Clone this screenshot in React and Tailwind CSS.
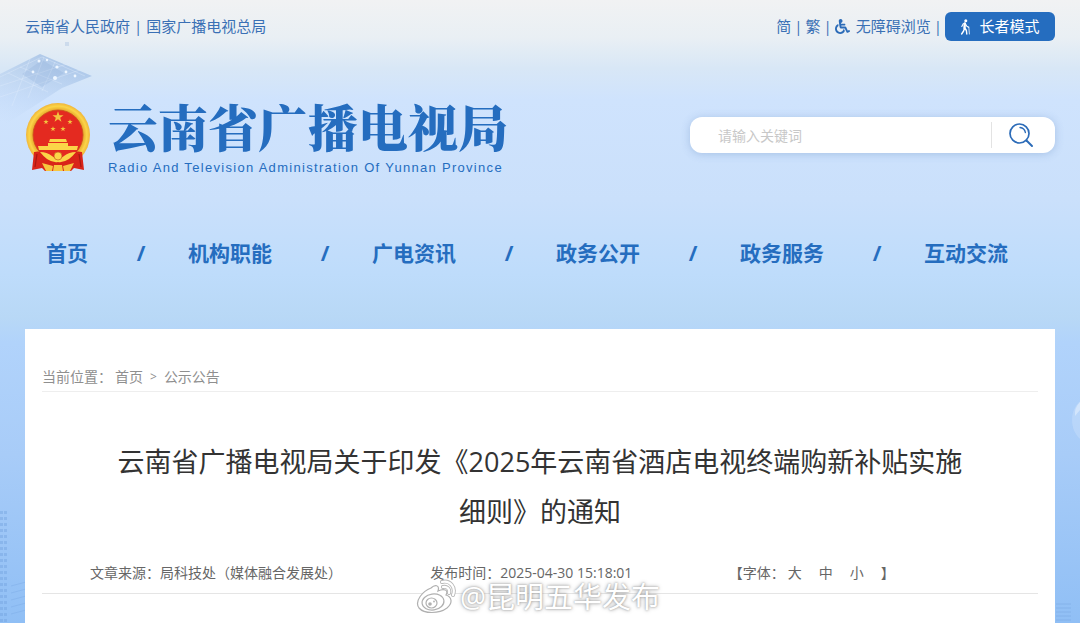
import { FaWheelchair } from 'react-icons/fa';

const navItems = ['首页', '机构职能', '广电资讯', '政务公开', '政务服务', '互动交流'];

function Backdrop() {
  return (
    <div className="absolute inset-0 overflow-hidden pointer-events-none" aria-hidden="true">
      <svg className="absolute left-0 top-9" width="130" height="100" viewBox="0 0 130 100">
        <defs>
          <linearGradient id="roof" x1="0.6" y1="0" x2="0.2" y2="1">
            <stop offset="0" stopColor="#8fb2e0" stopOpacity="0.65" />
            <stop offset="1" stopColor="#b9d2f3" stopOpacity="0" />
          </linearGradient>
        </defs>
        <path d="M0 38 L40 18 L92 40 L62 52 L0 92 Z" fill="url(#roof)" />
        <path d="M0 41 L42 21 L85 40 M0 50 L70 27 M0 61 L80 34 M12 70 L30 23 M28 62 L44 21 M42 55 L55 26 M20 31 L62 48 M8 37 L48 56" stroke="#e3eefc" strokeWidth="0.7" fill="none" opacity="0.5" />
        <path d="M22 38 L42 24 L64 37 L42 51 Z" fill="#7f9fd0" opacity="0.2" />
        <g fill="#eef6ff">
          <circle cx="39" cy="25" r="1.5" />
          <circle cx="47" cy="24" r="1.2" />
          <circle cx="57" cy="31" r="1.6" />
          <circle cx="66" cy="36" r="1.4" />
          <circle cx="55" cy="42" r="2" />
          <circle cx="33" cy="36" r="1.4" />
          <circle cx="75" cy="40" r="1.4" />
        </g>
        <rect x="65" y="6" width="4" height="4" fill="#c2d3e8" opacity="0.7" />
      </svg>
      <svg className="absolute left-0 bottom-0" width="26" height="112" viewBox="0 0 26 112">
        <defs>
          <pattern id="windows" width="4" height="6" patternUnits="userSpaceOnUse">
            <rect width="3" height="3" fill="#6f9fdc" />
          </pattern>
        </defs>
        <rect width="8" height="112" fill="url(#windows)" opacity="0.4" />
        <path d="M11 75 l15 -4 M11 82 l15 -4 M11 89 l15 -4 M11 96 l15 -4 M11 103 l15 -4" stroke="#7aa9e6" opacity="0.4" />
      </svg>
      <svg className="absolute right-0 bottom-0" width="25" height="225" viewBox="0 0 25 225">
        <ellipse cx="34" cy="22" rx="17" ry="22" fill="#d3e5fc" opacity="0.35" />
        <path d="M25 4 Q19 10 20 18 L25 12 Z" fill="#e2eefd" opacity="0.6" />
        <path d="M1 206 h15 M1 210 h15 M1 214 h15 M1 218 h15 M1 222 h15" stroke="#78a7e2" opacity="0.5" />
      </svg>
    </div>
  );
}

function WalkerIcon() {
  return (
    <svg width="11" height="16" viewBox="0 0 11 16" fill="none" stroke="currentColor" strokeLinecap="round" strokeLinejoin="round" aria-hidden="true">
      <circle cx="5.8" cy="1.7" r="1.5" fill="currentColor" stroke="none" />
      <path d="M4.8 4.5 L4.5 9" strokeWidth="2.4" />
      <path d="M4.6 9 L3.6 12 L1.6 15 M4.8 9 L6.4 11.5 L6.8 15" strokeWidth="1.4" />
      <path d="M3.4 4.5 L1.8 7.5 M5.4 4.8 L6.8 7.2 L8.6 8.2" strokeWidth="1.1" />
      <path d="M8.8 8 L9.4 15" strokeWidth="0.8" />
    </svg>
  );
}

function Emblem() {
  return (
    <svg className="mt-1" width="66" height="70" viewBox="0 0 66 70" role="img" aria-label="国徽">
      <defs>
        <radialGradient id="gold">
          <stop offset="0.78" stopColor="#e8a92c" />
          <stop offset="0.9" stopColor="#fbd548" />
          <stop offset="1" stopColor="#f0b53a" />
        </radialGradient>
        <path id="star" d="M0 -5 L1.2 -1.6 L4.8 -1.6 L1.9 0.6 L3 4.1 L0 2 L-3 4.1 L-1.9 0.6 L-4.8 -1.6 L-1.2 -1.6 Z" />
      </defs>
      <circle cx="33" cy="33" r="32" fill="url(#gold)" />
      <circle cx="33" cy="33" r="25" fill="#e42a20" stroke="#c9501c" strokeWidth="0.8" />
      <g fill="#f3c33f">
        <use href="#star" transform="translate(33 15) scale(1.15)" />
        <use href="#star" transform="translate(21 20) scale(0.55)" />
        <use href="#star" transform="translate(45 20) scale(0.55)" />
        <use href="#star" transform="translate(28 27) scale(0.55)" />
        <use href="#star" transform="translate(38 27) scale(0.55)" />
      </g>
      <path d="M25 37 h16 l1 3 h-18 Z M23 41 h20 v3 h-20 Z M13 44 h40 l-1 4 h-38 Z" fill="#fbd548" />
      <path d="M9 50 Q16 48 22 53 L27 57 Q33 61 39 57 L44 53 Q50 48 57 50 L59 68 L49 66 L46 69 H20 L17 66 L7 68 Z" fill="#d92419" />
      <path d="M15 50 Q22 50 27 54 Q33 60 39 54 Q44 50 51 50 Q47 55 44 57 Q38 61 33 60 Q28 61 22 57 Q19 55 15 50 Z" fill="#fbd548" />
      <circle cx="33" cy="54" r="4" fill="#fbd548" stroke="#c85a1c" strokeWidth="0.7" />
      <path d="M17 61 L28 64 L27 69 H21 Z M49 61 L38 64 L39 69 H45 Z M29 63 h8 l1 6 h-10 Z" fill="#f6c63f" />
      <path d="M12 52 L10 65 M54 52 L56 65" stroke="#a91812" strokeWidth="1.2" />
    </svg>
  );
}

function SearchIcon() {
  return (
    <svg width="26" height="26" viewBox="0 0 26 26" fill="none" stroke="#2b6bb8" strokeLinecap="round" aria-hidden="true">
      <circle cx="11.5" cy="11.5" r="9.5" strokeWidth="1.7" />
      <path d="M18.5 18.5 L24 24" strokeWidth="2" />
      <path d="M12 5.5 Q16.5 6 17.4 10.5" strokeWidth="1.3" />
    </svg>
  );
}

function TopBar() {
  return (
    <div className="flex h-[29px] items-center justify-between text-[15px] text-[#3a70b5]">
      <div className="flex gap-1">
        <a href="#gov">云南省人民政府</a>
        <span>|</span>
        <a href="#nrta">国家广播电视总局</a>
      </div>
      <div className="flex items-center gap-[3px]">
        <a href="#jian">简</a>
        <span>|</span>
        <a href="#fan">繁</a>
        <span>|</span>
        <a href="#accessible" className="flex items-center gap-1.5">
          <FaWheelchair className="size-[15px] text-[#2b6bb8]" />
          无障碍浏览
        </a>
        <span>|</span>
        <button type="button" className="flex h-[29px] w-[110px] items-center justify-center gap-2 rounded-md bg-[#256dbf] text-white">
          <WalkerIcon />
          长者模式
        </button>
      </div>
    </div>
  );
}

function Header() {
  return (
    <header className="mt-[57px] flex h-[74px] items-center justify-between">
      <div className="flex items-center gap-[17px] text-[#256dbf]">
        <Emblem />
        <div>
          <h1 className="font-['Noto_Serif_CJK_SC','Noto_Sans_CJK_SC',serif] text-[50px] leading-[66px] font-black whitespace-nowrap">云南省广播电视局</h1>
          <p className="font-['Liberation_Sans',sans-serif] text-[13px] leading-5 tracking-widest whitespace-nowrap">
            Radio And Television Administration Of Yunnan Province
          </p>
        </div>
      </div>
      <form className="flex h-9 w-[365px] items-center rounded-xl bg-white shadow-[0_1px_8px_rgba(80,120,180,0.3)]" onSubmit={(e) => e.preventDefault()}>
        <input
          type="text"
          aria-label="搜索"
          placeholder="请输入关键词"
          className="h-full min-w-0 flex-1 bg-transparent pl-7 text-sm text-gray-700 outline-none placeholder:text-[#c8c8c8]"
        />
        <button type="submit" aria-label="搜索" className="flex h-[26px] w-16 items-center border-l border-[#e3e3e3] pl-4">
          <SearchIcon />
        </button>
      </form>
    </header>
  );
}

function Nav() {
  return (
    <nav className="flex h-[157px] items-center justify-between pt-1.5 pr-[47px] pl-[21px] text-[21px] font-bold text-[#256dbf]">
      {navItems.map((item, i) => [
        i > 0 && <span key={`${item}-sep`} className="ml-1.5">/</span>,
        <a key={item} href={`#${item}`}>{item}</a>,
      ])}
    </nav>
  );
}

function Article() {
  return (
    <main className="flex-1 bg-white px-[17px] pt-[34px] pb-6">
      <div className="flex h-[29px] items-center border-b border-[#eeeeee] text-sm text-[#8f8f8f]">
        <span>当前位置：</span>
        <a href="#home" className="ml-[3px]">首页</a>
        <span className="mx-[7px] text-xs">&gt;</span>
        <a href="#notice">公示公告</a>
      </div>
      <h2 className="mt-[45px] px-16 text-center text-[27px] leading-[50px] text-[#333333]">
        云南省广播电视局关于印发《2025年云南省酒店电视终端购新补贴实施细则》的通知
      </h2>
      <div className="mt-4 grid h-[41px] grid-cols-[341fr_299fr_310fr] items-center border-b border-[#e5e5e5] pl-12 text-sm text-[#666666]">
        <span>文章来源：局科技处（媒体融合发展处）</span>
        <span>发布时间：2025-04-30 15:18:01</span>
        <div className="flex items-center gap-[17px]">
          <div className="flex gap-[3px]">
            <span>【字体：</span>
            <button type="button">大</button>
          </div>
          <button type="button">中</button>
          <button type="button">小</button>
          <span>】</span>
        </div>
      </div>
    </main>
  );
}

function Watermark() {
  return (
    <div className="pointer-events-none absolute bottom-2 left-1/2 ml-[-124px] flex items-center gap-1">
      <svg width="40" height="36" viewBox="0 0 40 36" aria-hidden="true">
        <path d="M15 9 C19 5 24 6 22 12 C28 9 33 11 30 16 C36 18 37 24 31 29 C23 35 8 35 3 29 C-2 22 7 12 15 9 Z" fill="#ffffff" stroke="#b0b0b0" strokeWidth="1.2" />
        <ellipse cx="17" cy="23" rx="11" ry="8" fill="#ffffff" stroke="#b0b0b0" strokeWidth="1.2" transform="rotate(-8 17 23)" />
        <ellipse cx="15.5" cy="24" rx="5.5" ry="5" fill="#ffffff" stroke="#b0b0b0" strokeWidth="1.2" />
        <circle cx="14" cy="25" r="1.8" fill="#b0b0b0" />
        <circle cx="18" cy="22.5" r="0.9" fill="#b0b0b0" />
        <path d="M26 3 C34 1 40 8 37 16 M27 8 C31 7 34 10 33 14" fill="none" stroke="#b8b8b8" strokeWidth="4" strokeLinecap="round" />
        <path d="M26 3 C34 1 40 8 37 16 M27 8 C31 7 34 10 33 14" fill="none" stroke="#ffffff" strokeWidth="2.2" strokeLinecap="round" />
      </svg>
      <span className="text-[29px] leading-8 whitespace-nowrap text-white [text-shadow:0_0_2px_#999,0_0_4px_#aaa]">@昆明五华发布</span>
    </div>
  );
}

export default function App() {
  return (
    <div className="relative flex min-h-screen flex-col bg-[linear-gradient(180deg,#f1f2f3_0%,#e9eff4_6%,#d8e7f6_11%,#cfe3fd_16%,#cae0fb_32%,#bedcfb_44%,#b8d8f6_51%,#b1d3fb_55%,#a8ccf8_73%,#90bff5_100%)] font-['Open_Sans','Noto_Sans_CJK_SC',sans-serif]">
      <Backdrop />
      <div className="relative flex flex-1 flex-col px-[25px] pt-3">
        <TopBar />
        <Header />
        <Nav />
        <Article />
      </div>
      <Watermark />
    </div>
  );
}
